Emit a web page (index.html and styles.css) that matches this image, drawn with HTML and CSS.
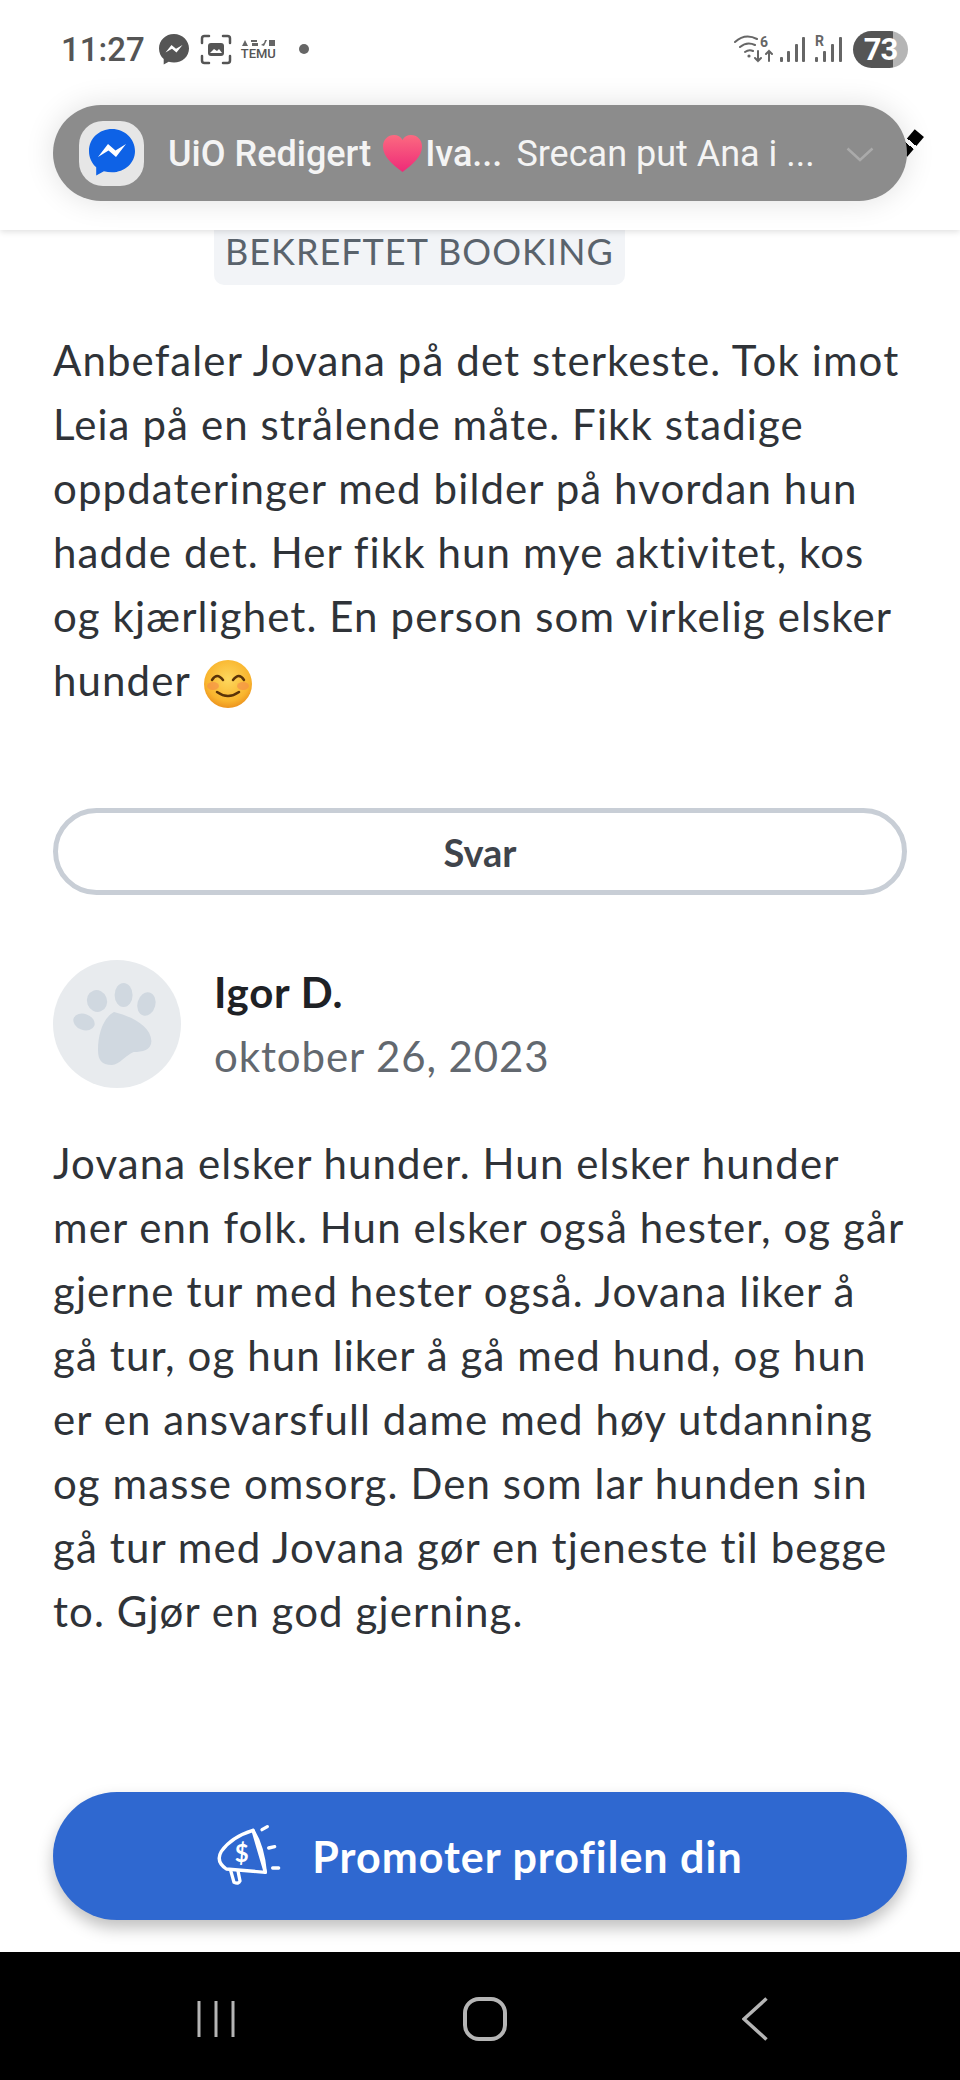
FILE: index.html

```html
<!DOCTYPE html>
<html>
<head>
  <title>Anmeldelser</title>
  <link rel="stylesheet" href="styles.css">
</head>
<body>
  <div class="page">
    <header class="top">
      <div class="status">
        <div class="status-left">
          <span class="time">11:27</span>
          <svg class="st-msg" width="30" height="31" viewBox="0 0 30 31"><path d="M15 0C6.600 0 0 6.200 0 14.500c0 4.300 1.800 8 4.700 10.600V30.500l5-2.700c1.600.5 3.400.7 5.300.7 8.400 0 15-6.100 15-14S23.400 0 15 0z" fill="#555"/><path d="M6.500 18.500l6-7.500 4.500 3.800 6.500-3.800-6 7.500-4.500-3.800z" fill="#fff"/></svg>
          <svg class="st-shot" width="32" height="31" viewBox="0 0 32 31" fill="none" stroke="#555" stroke-width="2.500" stroke-linecap="round"><path d="M2 9V4.500Q2 2 4.500 2H9M23 2h4.500Q30 2 30 4.500V9M30 22v4.500Q30 29 27.500 29H23M9 29H4.500Q2 29 2 26.500V22"/><rect x="8" y="9" width="16" height="13" rx="3" fill="#555" stroke="none"/><path d="M10 19l4-4 3 2 2-2 3 4z" fill="#fff" stroke="none"/></svg>
          <span class="temu">
            <svg width="35" height="8" viewBox="0 0 35 8" fill="#666"><path d="M1 7l3-6 3 6zM10 1h6v2h-6zM11 4h6v3h-6zM20 6l3 1 3-6-2 0-1 3zM28 1h6v6h-6z"/></svg>
            <span class="temu-name">TEMU</span>
          </span>
          <span class="st-dot"></span>
        </div>
        <div class="status-right">
          <svg width="40" height="30" viewBox="0 0 40 30" fill="none" stroke="#666" stroke-width="2" stroke-linecap="round"><path d="M1 8Q11-1 23 5M6 13q7-6 15-2M11 18q4-3 8-1"/><circle cx="15" cy="22" r="1.600" fill="#666" stroke="none"/><text x="26" y="13" class="wifi-six">6</text><path d="M24 17v10M21 24l3 3 3-3M35 27V17M32 20l3-3 3 3"/></svg>
          <svg class="bars" width="26" height="27" viewBox="0 0 26 27" fill="#666"><rect x="0" y="21" width="3" height="5" rx="1"/><rect x="7" y="15" width="3" height="11" rx="1"/><rect x="15" y="8" width="3" height="18" rx="1"/><rect x="22" y="1" width="3" height="25" rx="1"/></svg>
          <span class="roam"><span class="roam-r">R</span><svg class="roam-bars" width="27" height="27" viewBox="0 0 27 27" fill="#666"><rect x="0" y="21" width="3" height="5" rx="1"/><rect x="8" y="15" width="3" height="11" rx="1"/><rect x="16" y="8" width="3" height="18" rx="1"/><rect x="24" y="1" width="3" height="25" rx="1"/></svg></span>
          <span class="battery">73</span>
        </div>
      </div>
      <span class="pen"></span>
      <div class="pill">
        <span class="pill-icon">
          <svg width="46" height="48" viewBox="0 0 46 48"><path d="M23 0C10.300 0 0 9.500 0 22c0 6.500 2.700 12.300 7.200 16.300V46.500l7.700-4.300c2.500.7 5.300 1.100 8.100 1.100 12.700 0 23-9.200 23-21.300S35.700 0 23 0z" fill="#0e62e6"/><path d="M9 28l10-13 7.500 6.500L37 15 27 28l-7.500-6.500z" fill="#fff"/></svg>
        </span>
        <span class="pill-title">UiO Redigert</span>
        <svg class="heart" width="39" height="37" viewBox="0 0 39 37"><defs><linearGradient id="hg" x1="0" y1="0" x2="0" y2="1"><stop offset="0" stop-color="#fb6a80"/><stop offset="1" stop-color="#ee2a78"/></linearGradient></defs><path d="M19.500 37C10 30 0 22 0 11.500 0 4.500 5 0 11 0c3.800 0 6.800 1.800 8.500 5C21.200 1.800 24.200 0 28 0c6 0 11 4.500 11 11.500C39 22 29 30 19.500 37z" fill="url(#hg)"/></svg>
        <span class="pill-name">Iva...</span>
        <span class="pill-msg">Srecan put Ana i ...</span>
        <svg class="chev" width="28" height="15" viewBox="0 0 28 15" fill="none" stroke="#aaa" stroke-width="2.500"><path d="M1.500 1.500L14 13 26.500 1.500"/></svg>
      </div>
    </header>

    <main class="content">
      <div class="tag-row"><span class="tag">BEKREFTET BOOKING</span></div>

      <p class="review first">Anbefaler Jovana på det sterkeste. Tok imot<br>Leia på en strålende måte. Fikk stadige<br>oppdateringer med bilder på hvordan hun<br>hadde det. Her fikk hun mye aktivitet, kos<br>og kjærlighet. En person som virkelig elsker<br>hunder <svg class="smile" width="48" height="48" viewBox="0 0 48 48"><defs><radialGradient id="sg" cx="0.500" cy="0.400" r="0.650"><stop offset="0" stop-color="#fdd85e"/><stop offset="0.700" stop-color="#f9b52e"/><stop offset="1" stop-color="#e8881a"/></radialGradient></defs><circle cx="24" cy="24" r="24" fill="url(#sg)"/><ellipse cx="9" cy="26" rx="6" ry="4" fill="#f48a4a" opacity="0.600"/><ellipse cx="39" cy="26" rx="6" ry="4" fill="#f48a4a" opacity="0.600"/><path d="M8 20q5-8 11 0M29 20q6-8 11 0M13 32q11 8 22 0" fill="none" stroke="#5a3308" stroke-width="2.500" stroke-linecap="round"/></svg></p>

      <button class="reply">Svar</button>

      <div class="author">
        <svg class="avatar" width="128" height="128" viewBox="0 0 128 128"><circle cx="64" cy="64" r="64" fill="#e8ebee"/><g fill="#d0d8e0"><ellipse cx="44" cy="41" rx="10" ry="11" transform="rotate(-20 44 41)"/><ellipse cx="70.600" cy="35" rx="9" ry="12"/><ellipse cx="93.400" cy="44" rx="9" ry="12" transform="rotate(15 93.400 44)"/><ellipse cx="31" cy="62" rx="11" ry="8" transform="rotate(20 31 62)"/><path d="M61 52C78 56 98 66 98.400 81c0 9-9 11-17.800 11C74 94 66 105 59 105 48 105 45 99 45 90 45 74 50 58 61 52z"/></g></svg>
        <div class="author-text">
          <div class="author-name">Igor D.</div>
          <div class="author-date">oktober 26, 2023</div>
        </div>
      </div>

      <p class="review">Jovana elsker hunder. Hun elsker hunder<br>mer enn folk. Hun elsker også hester, og går<br>gjerne tur med hester også. Jovana liker å<br>gå tur, og hun liker å gå med hund, og hun<br>er en ansvarsfull dame med høy utdanning<br>og masse omsorg. Den som lar hunden sin<br>gå tur med Jovana gør en tjeneste til begge<br>to. Gjør en god gjerning.</p>

      <button class="promote">
        <svg width="64" height="64" viewBox="27 33 192 192" fill="none" stroke="#fff" stroke-width="10" stroke-linecap="round" stroke-linejoin="round"><path d="M135 52L172 178 55 168Q22 145 40 115 70 72 135 52z"/><path d="M135 52q30 50 37 126"/><path d="M68 172l10 36q14 6 18-4l-6-30"/><text x="80" y="148" class="dollar">$</text><path d="M162 50l16-9M182 105l18-4M194 165h18"/></svg>
        <span>Promoter profilen din</span>
      </button>
    </main>

    <nav class="navbar">
      <svg class="nav-recent" width="38" height="38" viewBox="0 0 38 38" fill="none" stroke="#b5b5b5" stroke-width="3"><path d="M2 1v36M19 1v36M36 1v36"/></svg>
      <svg class="nav-home" width="44" height="44" viewBox="0 0 44 44" fill="none" stroke="#b5b5b5" stroke-width="4"><rect x="2" y="2" width="40" height="40" rx="14"/></svg>
      <svg width="26" height="44" viewBox="0 0 26 44" fill="none" stroke="#b5b5b5" stroke-width="3.500"><path d="M24.500 1.500L2 22l22.500 20.500"/></svg>
    </nav>
  </div>
</body>
</html>
```

FILE: styles.css

```css
* {
  box-sizing: border-box;
}

html,
body {
  margin: 0;
  padding: 0;
  background: #fff;
}

/* Whole phone screen */
.page {
  width: 960px;
  height: 2080px;
  display: flex;
  flex-direction: column;
  overflow: hidden;
  font-family: Lato, "Liberation Sans", sans-serif;
}

/* Status bar and heads-up notification */
.top {
  position: relative;
  height: 230px;
  flex-shrink: 0;
  padding: 30px 52px 0 61px;
  background: #fff;
  box-shadow: 0 2px 6px rgba(0, 0, 0, 0.12);
  z-index: 2;
}

.status {
  height: 38px;
  display: flex;
  justify-content: space-between;
  align-items: center;
  font-family: Roboto, sans-serif;
  color: #555;
}

.status-left,
.status-right {
  display: flex;
  align-items: center;
}

.time {
  font-size: 33px;
  font-weight: 500;
  margin-right: 14px;
}

.st-msg {
  margin-right: 11px;
}

.st-shot {
  margin-right: 9px;
}

.temu {
  display: flex;
  flex-direction: column;
  gap: 2px;
  width: 36px;
  line-height: 1;
  margin-right: 22px;
}

.temu-name {
  font-size: 13px;
  font-weight: 500;
  line-height: 10px;
}

.st-dot {
  width: 10px;
  height: 10px;
  border-radius: 50%;
  background: #666;
}

.wifi-six {
  font-family: Roboto, sans-serif;
  font-size: 14px;
  font-weight: 700;
  fill: #666;
  stroke: none;
}

.bars {
  margin-left: 6px;
}

.roam {
  position: relative;
  display: flex;
  margin-left: 9px;
}

.roam-r {
  position: absolute;
  left: 0;
  top: -3px;
  font-size: 14px;
  font-weight: 700;
  color: #666;
}

.battery {
  width: 55px;
  height: 37px;
  margin-left: 11px;
  border-radius: 19px;
  background: linear-gradient(to right, #555 40px, #b5b5b5 40px);
  color: #fff;
  font-size: 31px;
  font-weight: 700;
  letter-spacing: -1px;
  line-height: 37px;
  text-align: center;
}

.pen {
  position: absolute;
  left: 905px;
  top: 130px;
  width: 12px;
  height: 26px;
  background: linear-gradient(#000 12px, #fff 12px, #fff 16px, #000 16px);
  transform: rotate(40deg);
}

.pill {
  position: absolute;
  left: 53px;
  top: 105px;
  width: 854px;
  height: 96px;
  display: flex;
  align-items: center;
  padding-left: 26px;
  border-radius: 48px;
  background: #8c8c8c;
  color: #f4f4f4;
  font-family: Roboto, sans-serif;
  font-size: 36px;
  box-shadow: 0 0 30px rgba(0, 0, 0, 0.12);
}

.pill-icon {
  width: 65px;
  height: 65px;
  flex-shrink: 0;
  display: flex;
  align-items: center;
  justify-content: center;
  margin-right: 24px;
  border-radius: 24px;
  background: #e6e6e6;
}

.pill-title,
.pill-name,
.pill-msg {
  position: relative;
  top: 1px;
}

.pill-title,
.pill-name {
  font-weight: 500;
}

.heart {
  margin: 0 3px 0 12px;
}

.pill-msg {
  margin-left: 14px;
}

.chev {
  position: absolute;
  left: 793px;
  top: 42px;
}

/* Reviews */
.content {
  flex: 1;
  display: flex;
  flex-direction: column;
  padding: 0 53px 32px;
}

.tag-row {
  display: flex;
  padding-left: 161px;
}

.tag {
  height: 55px;
  padding: 0 11px 0 11px;
  border-radius: 0 0 10px 10px;
  background: #f2f4f7;
  color: #5a636c;
  font-size: 36px;
  letter-spacing: 1px;
  line-height: 42px;
  white-space: nowrap;
}

.review {
  margin: 43px 0 0;
  color: #2f3338;
  font-size: 42px;
  letter-spacing: 1.100px;
  line-height: 64px;
  white-space: nowrap;
}

.review.first {
  margin-top: 43px;
}

.smile {
  vertical-align: -12px;
  margin-left: 2px;
}

.reply {
  height: 87px;
  margin-top: 96px;
  border: 5px solid #c8ced6;
  border-radius: 44px;
  background: #fff;
  color: #3f444b;
  font-family: Lato, sans-serif;
  font-size: 38px;
  font-weight: 700;
}

.author {
  display: flex;
  align-items: center;
  margin-top: 65px;
}

.avatar {
  flex-shrink: 0;
  margin-right: 33px;
}

.author-name {
  color: #1e2125;
  font-size: 42px;
  font-weight: 700;
  letter-spacing: 0.800px;
  line-height: 64px;
}

.author-date {
  color: #62686f;
  font-size: 42px;
  letter-spacing: 0.900px;
  line-height: 64px;
}

.promote {
  height: 128px;
  margin-top: auto;
  display: flex;
  align-items: center;
  justify-content: center;
  gap: 31px;
  border: none;
  border-radius: 64px;
  background: #2f68d0;
  color: #fff;
  font-family: Lato, sans-serif;
  font-size: 43px;
  font-weight: 700;
  letter-spacing: 1px;
  box-shadow: 0 8px 16px rgba(0, 0, 0, 0.25);
}

.dollar {
  font-family: Lato, sans-serif;
  font-size: 72px;
  font-weight: 700;
  fill: #fff;
  stroke: none;
  letter-spacing: 0;
}

/* Android buttons */
.navbar {
  height: 128px;
  flex-shrink: 0;
  display: flex;
  align-items: center;
  padding: 6px 0 0 197px;
  background: #000;
}

.nav-recent {
  margin-right: 228px;
}

.nav-home {
  margin-right: 235px;
}
```
